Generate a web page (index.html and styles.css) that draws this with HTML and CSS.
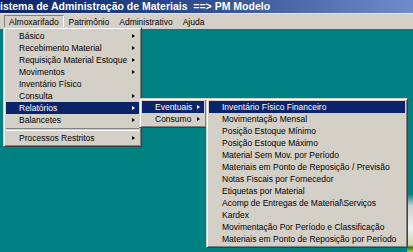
FILE: index.html
```html
<!DOCTYPE html>
<html lang="pt-BR">
<head>
    <meta charset="UTF-8">
    <meta name="viewport" content="width=device-width, initial-scale=1.0">
    <title>Sistema de Administração de Materiais</title>
    <link rel="stylesheet" href="styles.css">
</head>
<body>

<div class="window">
    <div class="titlebar">istema de Administração de Materiais&nbsp; ==&gt; PM Modelo</div>
    <div class="menubar">
        <span class="menubar-item pressed">Almoxarifado</span>
        <span class="menubar-item">Patrimônio</span>
        <span class="menubar-item">Administrativo</span>
        <span class="menubar-item">Ajuda</span>
    </div>
    <div class="desktop">
        <div class="desk-icon"></div>
    </div>

    <!-- Almoxarifado -->
    <div class="menu menu-main">
        <div class="item sub">Básico</div>
        <div class="item sub">Recebimento Material</div>
        <div class="item sub">Requisição Material Estoque</div>
        <div class="item sub">Movimentos</div>
        <div class="item">Inventário Físico</div>
        <div class="item sub">Consulta</div>
        <div class="item sub active">Relatórios</div>
        <div class="item sub">Balancetes</div>
        <div class="separator"></div>
        <div class="item sub">Processos Restritos</div>
    </div>

    <!-- Relatórios -->
    <div class="menu menu-reports">
        <div class="item sub active">Eventuais</div>
        <div class="item sub">Consumo</div>
    </div>

    <!-- Eventuais -->
    <div class="menu menu-eventual">
        <div class="item active">Inventário Físico Financeiro</div>
        <div class="item">Movimentação Mensal</div>
        <div class="item">Posição Estoque Mínimo</div>
        <div class="item">Posição Estoque Máximo</div>
        <div class="item">Material Sem Mov. por Período</div>
        <div class="item">Materiais em Ponto de Reposição / Previsão</div>
        <div class="item">Notas Fiscais por Fornecedor</div>
        <div class="item">Etiquetas por Material</div>
        <div class="item">Acomp de Entregas de Material\Serviços</div>
        <div class="item">Kardex</div>
        <div class="item">Movimentação Por Período e Classificação</div>
        <div class="item">Materiais em Ponto de Reposição por Período</div>
    </div>
</div>

</body>
</html>
```

FILE: styles.css
```css
body {
    margin: 0;
    background-color: #008080;
    font-family: "Liberation Sans", Arial, sans-serif;
    font-size: 8.5px;
    color: #000;
}

.window {
    position: relative;
    width: 413px;
    height: 252px;
    overflow: hidden;
    display: flex;
    flex-direction: column;
}

.titlebar {
    height: 13px;
    line-height: 12px;
    background: linear-gradient(to right, #0a246a, #2c4a8c 45%, #6f8ccb);
    color: #fff;
    font-weight: bold;
    font-size: 10.5px;
    white-space: nowrap;
}

.menubar {
    height: 15px;
    background-color: #d4d0c8;
    border-top: 1px solid #e8e6e1;
    display: flex;
    align-items: center;
    padding-left: 4px;
    gap: 0;
}

.menubar-item {
    padding: 0 4px;
    height: 12px;
    line-height: 12px;
    border: 1px solid transparent;
}

.menubar-item.pressed {
    border-color: #808080 #fff #fff #808080;
}

.desktop {
    flex: 1;
    position: relative;
    background-color: #008080;
}

.desk-icon {
    position: absolute;
    right: 0;
    bottom: 0;
    width: 6px;
    height: 58px;
    background: linear-gradient(to bottom, #008080, #c8d4d0 20%, #eef0ee 60%, #c9d7a8 88%, #3d6a2c 92%, #c8c830);
}

.menu {
    position: absolute;
    background-color: #d4d0c8;
    border: 1px solid;
    border-color: #d4d0c8 #404040 #404040 #d4d0c8;
    box-shadow: inset 1px 1px #fff, inset -1px -1px #808080;
    padding: 2px;
    box-sizing: border-box;
}

.menu-main {
    left: 3px;
    top: 27px;
    width: 139px;
}

.menu-reports {
    left: 139px;
    top: 98px;
    width: 68px;
}

.menu-eventual {
    left: 206px;
    top: 98px;
    width: 202px;
}

.item {
    position: relative;
    height: 12px;
    line-height: 12px;
    padding-left: 13px;
    white-space: nowrap;
}

.item.active {
    background-color: #0a246a;
    color: #fff;
}

.item.sub::after {
    content: "";
    position: absolute;
    right: 4px;
    top: 4px;
    border-left: 3px solid #000;
    border-top: 2.5px solid transparent;
    border-bottom: 2.5px solid transparent;
}

.item.sub.active::after {
    border-left-color: #fff;
}

.separator {
    height: 1px;
    margin: 2px 0 1px;
    border-top: 1px solid #808080;
    border-bottom: 1px solid #fff;
}
```
